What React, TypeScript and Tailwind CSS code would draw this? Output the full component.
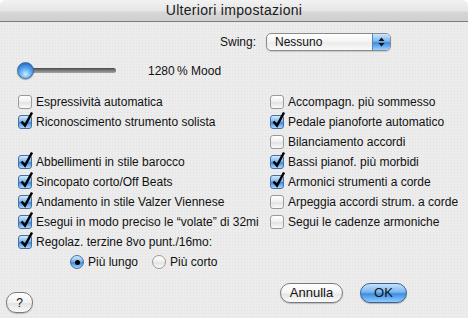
import React from "react";

const leftRows: (string | [string, boolean] | null)[] = [
    ["Espressività automatica", false],
    ["Riconoscimento strumento solista", true],
    null,
    ["Abbellimenti in stile barocco", true],
    ["Sincopato corto/Off Beats", true],
    ["Andamento in stile Valzer Viennese", true],
    ["Esegui in modo preciso le \u201cvolate\u201d di 32mi", true],
    ["Regolaz. terzine 8vo punt./16mo:", true],
];

const rightRows: [string, boolean][] = [
    ["Accompagn. più sommesso", false],
    ["Pedale pianoforte automatico", true],
    ["Bilanciamento accordi", false],
    ["Bassi pianof. più morbidi", true],
    ["Armonici strumenti a corde", true],
    ["Arpeggia accordi strum. a corde", false],
    ["Segui le cadenze armoniche", false],
];

function Checkbox({ checked }: { checked: boolean }) {
    return (
        <span className="relative inline-block w-[14px] h-[14px] shrink-0">
            <span
                className={
                    checked
                        ? "absolute inset-0 rounded-[3px] border border-[#4a6f9e] bg-[linear-gradient(#d2ebff,#7ab9ef_45%,#3d8be0_55%,#a9d8ff)]"
                        : "absolute inset-0 rounded-[3px] border border-[#9a9a9a] bg-[linear-gradient(#ffffff,#efefef_50%,#e2e2e2_55%,#fbfbfb)]"
                }
            />
            {checked && (
                <svg className="absolute left-[1px] top-[-4px]" width="15" height="17" viewBox="0 0 15 17">
                    <path d="M2.5 10.5 L6 14.5 L13 1.5" fill="none" stroke="#000" strokeWidth="2.5" strokeLinejoin="miter" />
                </svg>
            )}
        </span>
    );
}

function CheckRow({ label, checked }: { label: string; checked: boolean }) {
    return (
        <div className="h-[20px] flex items-center gap-[4px] whitespace-nowrap">
            <Checkbox checked={checked} />
            <span>{label}</span>
        </div>
    );
}

function Radio({ selected }: { selected: boolean }) {
    return selected ? (
        <span className="w-[14px] h-[14px] rounded-full border border-[#4a6f9e] bg-[linear-gradient(#d2ebff,#7ab9ef_45%,#3d8be0_55%,#a9d8ff)] flex items-center justify-center shrink-0">
            <span className="w-[5px] h-[5px] rounded-full bg-black" />
        </span>
    ) : (
        <span className="block w-[14px] h-[14px] rounded-full border border-[#9a9a9a] bg-[linear-gradient(#ffffff,#efefef_50%,#e2e2e2_55%,#fbfbfb)] shrink-0" />
    );
}

export default function App() {
    return (
        <div className="w-[468px] h-[318px] bg-white">
            <div
                className="w-[468px] h-[318px] rounded-t-[6px] overflow-hidden flex flex-col text-[12px] text-[#111] bg-[#ececec] bg-[radial-gradient(circle,#e1e1e1_0.7px,transparent_0.8px)] bg-[length:3px_3px]"
                style={{ fontFamily: '"Liberation Sans", Arial, sans-serif' }}
            >
                <div className="h-[22px] shrink-0 border-b border-[#7d7d7d] bg-[linear-gradient(#f2f2f2,#e6e6e6_50%,#d6d6d6_60%,#cfcfcf)] flex items-center justify-center text-[14px] tracking-[0.3px] text-[#1a1a1a]">
                    Ulteriori impostazioni
                </div>

                <div className="mt-[11px] h-[18px] flex items-center pl-[220px] gap-[10px]">
                    <span>Swing:</span>
                    <div className="w-[125px] h-[18px] rounded-[5px] border border-[#8a8a8a] bg-[linear-gradient(#ffffff,#f3f3f3_50%,#ebebeb_55%,#fafafa)] flex items-center overflow-hidden shadow-[0_1px_1px_rgba(0,0,0,0.15)]">
                        <span className="flex-1 pl-[8px]">Nessuno</span>
                        <span className="w-[18px] h-full border-l border-[#5a82b4] bg-[linear-gradient(#cde7fd,#7bb8ee_45%,#3c8be0_55%,#9fd3ff)] flex items-center justify-center">
                            <svg width="7" height="10" viewBox="0 0 7 10">
                                <path d="M3.5 0.5 L6.5 4 H0.5 Z M3.5 9.5 L6.5 6 H0.5 Z" fill="#111" />
                            </svg>
                        </span>
                    </div>
                </div>

                <div className="mt-[11px] h-[17px] flex items-center">
                    <div className="ml-[17px] w-[99px] h-[17px] flex items-center">
                        <span className="w-[17px] h-[17px] rounded-full border border-[#3b6aa8] bg-[radial-gradient(circle_at_50%_75%,#c8ecff,#5aa6ef_45%,#2c72c8_80%)] shadow-[0_1px_1px_rgba(0,0,0,0.3)] shrink-0 z-10" />
                        <span className="flex-1 h-[5px] -ml-[2px] rounded-r-full bg-[linear-gradient(#4a4a4a,#7a7a7a_50%,#a5a5a5)]" />
                    </div>
                    <span className="ml-[32px]">1280&thinsp;% Mood</span>
                </div>

                <div className="mt-[13px] grid grid-cols-[252px_1fr] pl-[18px]">
                    <div className="flex flex-col">
                        {leftRows.map((r, i) =>
                            r ? (
                                <CheckRow key={i} label={(r as [string, boolean])[0]} checked={(r as [string, boolean])[1]} />
                            ) : (
                                <div key={i} className="h-[20px]" />
                            )
                        )}
                        <div className="h-[20px] flex items-center pl-[52px] whitespace-nowrap">
                            <Radio selected />
                            <span className="ml-[4px]">Più lungo</span>
                            <span className="ml-[14px]">
                                <Radio selected={false} />
                            </span>
                            <span className="ml-[4px]">Più corto</span>
                        </div>
                    </div>
                    <div className="flex flex-col">
                        {rightRows.map(([label, checked], i) => (
                            <CheckRow key={i} label={label} checked={checked} />
                        ))}
                    </div>
                </div>

                <div className="mt-[11px] flex items-start">
                    <button className="ml-[6px] mt-[9px] w-[27px] h-[21px] rounded-[10px] border border-[#7a7a7a] bg-[linear-gradient(#ffffff,#f1f1f1_50%,#e3e3e3_55%,#fafafa)] text-[12px] flex items-center justify-center shadow-[0_1px_1px_rgba(0,0,0,0.2)]">
                        ?
                    </button>
                    <div className="ml-auto mr-[61px] flex gap-[17px]">
                        <button className="w-[63px] h-[20px] rounded-full border border-[#7a7a7a] bg-[linear-gradient(#ffffff,#f3f3f3_50%,#e6e6e6_55%,#fbfbfb)] text-[13px] flex items-center justify-center shadow-[0_1px_1px_rgba(0,0,0,0.2)]">
                            Annulla
                        </button>
                        <button className="w-[47px] h-[20px] rounded-full border border-[#3d5f95] bg-[linear-gradient(#c4e2fc,#78b6ee_45%,#3f8de1_55%,#8fcdff)] text-[13px] flex items-center justify-center shadow-[0_1px_1px_rgba(0,0,0,0.25)]">
                            OK
                        </button>
                    </div>
                </div>
            </div>
        </div>
    );
}
